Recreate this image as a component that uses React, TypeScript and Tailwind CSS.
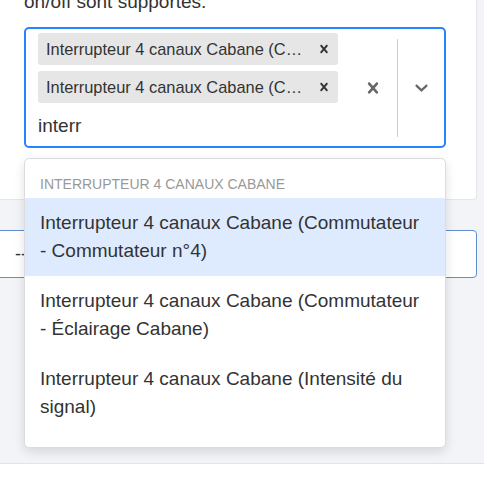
import React from "react";

const OPTIONS = [
  "Interrupteur 4 canaux Cabane (Commutateur - Commutateur n°4)",
  "Interrupteur 4 canaux Cabane (Commutateur - Éclairage Cabane)",
  "Interrupteur 4 canaux Cabane (Intensité du signal)",
];

function SmallX({ className }: { className?: string }) {
  return (
    <svg viewBox="0 0 20 20" className={className} fill="currentColor">
      <path d="M14.348 14.849c-0.469 0.469-1.229 0.469-1.697 0l-2.651-3.030-2.651 3.029c-0.469 0.469-1.229 0.469-1.697 0-0.469-0.469-0.469-1.229 0-1.697l2.758-3.15-2.759-3.152c-0.469-0.469-0.469-1.228 0-1.697s1.228-0.469 1.697 0l2.652 3.031 2.651-3.031c0.469-0.469 1.228-0.469 1.697 0s0.469 1.229 0 1.697l-2.758 3.152 2.758 3.15c0.469 0.469 0.469 1.229 0 1.698z" />
    </svg>
  );
}

function Chevron({ className }: { className?: string }) {
  return (
    <svg viewBox="0 0 20 20" className={className} fill="currentColor">
      <path d="M4.516 7.548c0.436-0.446 1.043-0.481 1.576 0l3.908 3.747 3.908-3.747c0.533-0.481 1.141-0.446 1.574 0 0.436 0.445 0.408 1.197 0 1.615-0.406 0.418-4.695 4.502-4.695 4.502-0.217 0.223-0.502 0.335-0.787 0.335s-0.57-0.112-0.789-0.335c0 0-4.287-4.084-4.695-4.502s-0.436-1.17 0-1.615z" />
    </svg>
  );
}

function Chip({ label }: { label: string }) {
  return (
    <div className="flex h-8 w-[300px] items-center rounded-[3px] bg-[#e6e6e6]">
      <span className="min-w-0 flex-1 truncate pl-2 text-[16.4px] text-[#333]">{label}</span>
      <span className="flex w-7 items-center justify-center text-[#333]">
        <SmallX className="h-[16px] w-[16px]" />
      </span>
    </div>
  );
}

export default function App() {
  return (
    <div
      className="relative h-[500px] w-[484px] overflow-hidden bg-white"
      style={{ fontFamily: '"Liberation Sans", Arial, sans-serif' }}
    >
      <div className="flex h-[464px] flex-col border-b border-[#dfe3ea] bg-[#f3f4f8]">
        {/* field card */}
        <div className="-ml-2 h-[200px] w-[485px] rounded-br-[4px] border-r border-b border-[#e3e6ec] bg-white pl-8">
          <p className="-mt-[9px] text-[19px] leading-[22px] text-[#333]">on/off sont supportés.</p>
          <div className="mt-[14px] flex h-[121px] w-[422px] rounded-[5px] border-2 border-[#2684ff] bg-white">
            <div className="flex flex-1 flex-col gap-[6px] pt-[4px] pl-3">
              <Chip label="Interrupteur 4 canaux Cabane (Commutateur - Commutateur n°4)" />
              <Chip label="Interrupteur 4 canaux Cabane (Commutateur - Éclairage Cabane)" />
              <div className="mt-[7px] text-[19px] leading-[20px] text-[#333]">interr</div>
            </div>
            <div className="flex items-center text-[#666]">
              <span className="flex w-[48px] items-center justify-center">
                <SmallX className="h-[22px] w-[22px]" />
              </span>
              <span className="h-[98px] w-px bg-[#ccc]" />
              <span className="flex w-[46px] items-center justify-center">
                <Chevron className="h-[21px] w-[21px]" />
              </span>
            </div>
          </div>
        </div>
        {/* next input */}
        <div className="mt-[30px] -ml-2 flex h-[48px] w-[485px] items-center rounded-[4px] border border-[#5f8fd0] bg-white pl-[22px] text-[18px] text-[#333]">
          --
        </div>
      </div>

      {/* dropdown menu */}
      <div className="absolute top-[158px] left-[24px] w-[422px] rounded-[5px] border border-[#dcdcdc] bg-white pb-[15px] shadow-[0_4px_11px_rgba(0,0,0,0.12)]">
        <div className="px-[15px] pt-[17px] pb-[6px] text-[14px] leading-[16px] text-[#999] uppercase">
          Interrupteur 4 canaux Cabane
        </div>
        {OPTIONS.map((o, i) => (
          <div
            key={o}
            className={`px-[15px] py-[11px] text-[19px] leading-[28px] text-[#333] ${i === 0 ? "bg-[#deebff]" : "bg-white"}`}
          >
            {o}
          </div>
        ))}
      </div>
    </div>
  );
}
